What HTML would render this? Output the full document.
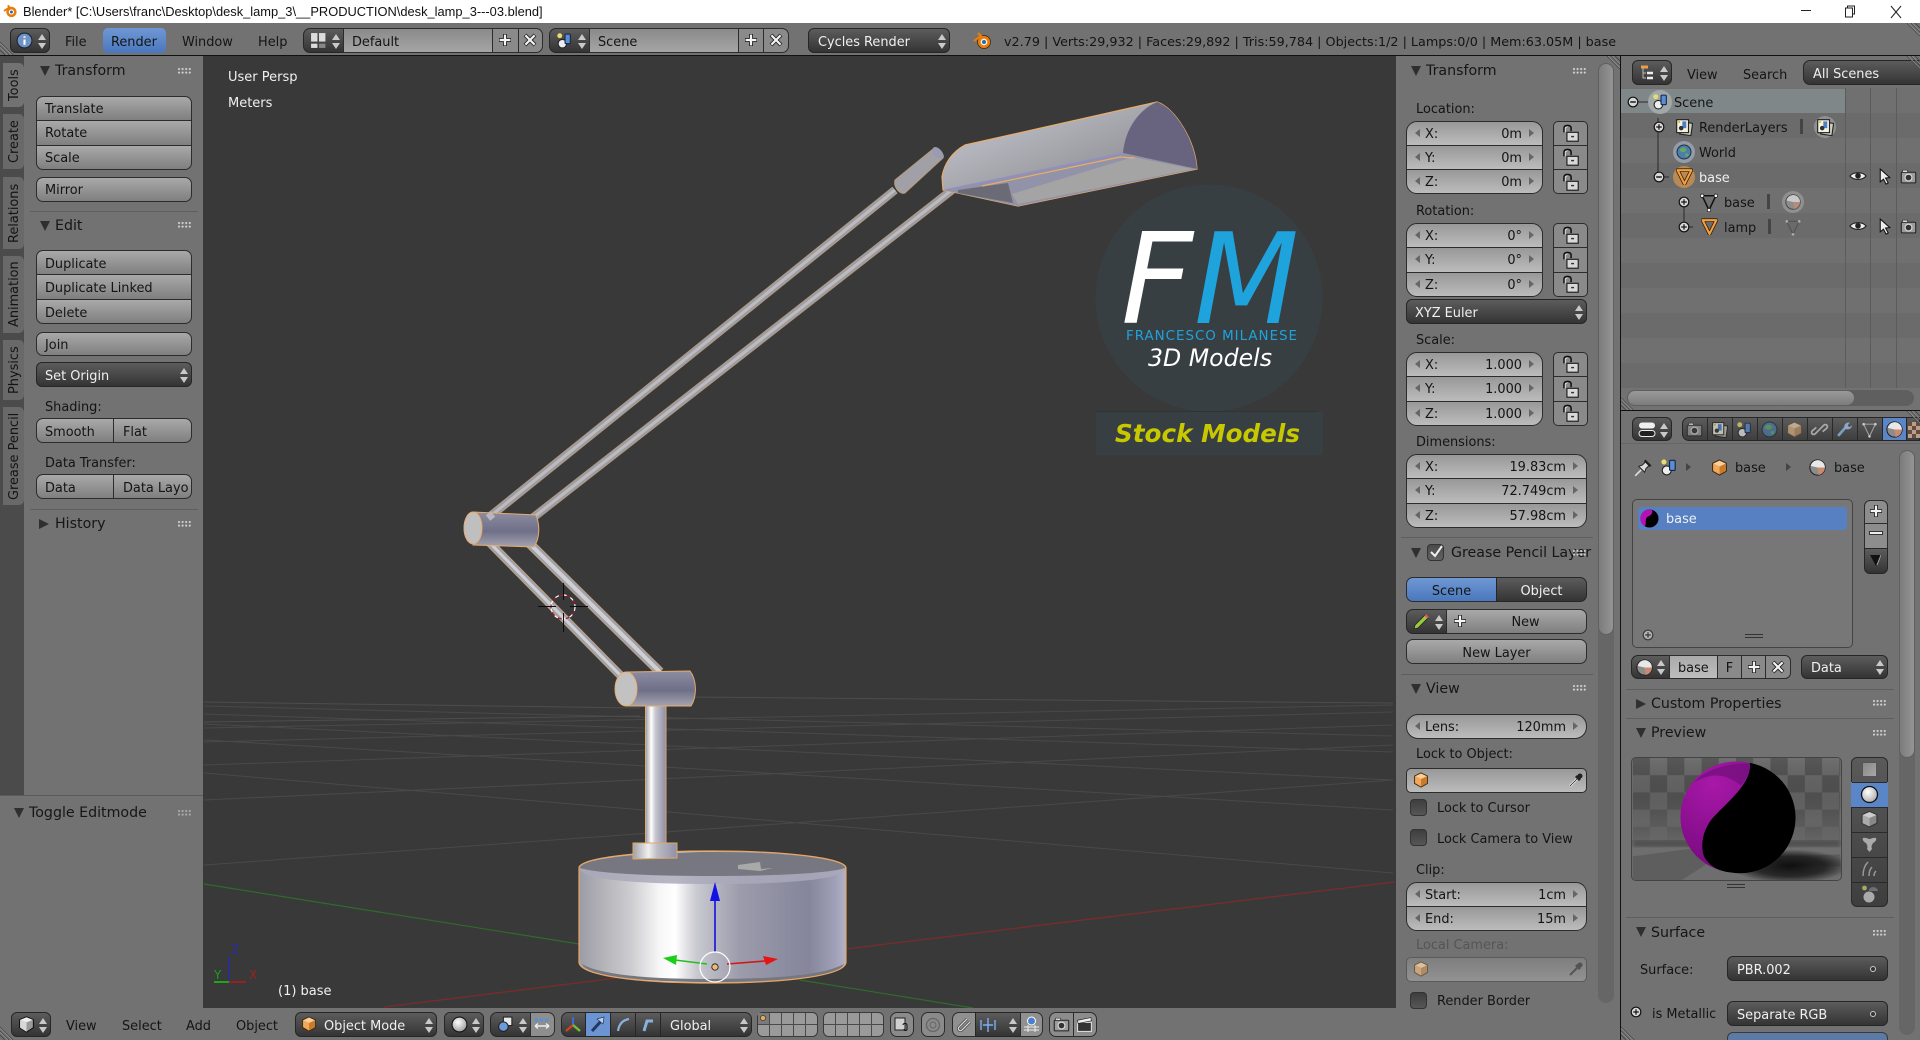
<!DOCTYPE html>
<html><head><meta charset="utf-8"><title>Blender</title>
<style>
html,body{margin:0;padding:0;width:1920px;height:1040px;overflow:hidden;background:#727272}
body{font-family:"DejaVu Sans","Liberation Sans",sans-serif;font-size:12.9px;color:#141414;position:relative}
div,span,svg{box-sizing:border-box}
.p{position:absolute}
.x{position:absolute;white-space:nowrap;line-height:20px;margin-top:1px}
.h{position:absolute;white-space:nowrap;line-height:20px;font-size:14.2px;color:#161616}
.w{color:#f0f0f0}
.b{position:absolute;background:linear-gradient(#a9a9a9,#7f7f7f);border:1px solid #2c2c2c;line-height:26px;padding-left:8px;white-space:nowrap;overflow:hidden}
.c{text-align:center;padding-left:0}
.d{position:absolute;background:linear-gradient(#5c5c5c,#343434);border:1px solid #262626;line-height:27px;padding-left:9px;white-space:nowrap;color:#f0f0f0;border-radius:6px}
.n{position:absolute;background:linear-gradient(#989898,#bcbcbc);border:1px solid #2c2c2c;line-height:26px;white-space:nowrap}
.n span{position:absolute;left:18px}
.n b{font-weight:normal;position:absolute;right:20px}
.n i,.n u{position:absolute;top:7px;width:0;height:0;border-top:4px solid transparent;border-bottom:4px solid transparent}
.n i{left:8px;border-right:5px solid #666}
.n u{right:8px;border-left:5px solid #666}
.ra{border-radius:7px}.rt{border-radius:7px 7px 0 0}.rb{border-radius:0 0 7px 7px}.rl{border-radius:7px 0 0 7px}.rr{border-radius:0 7px 7px 0}
.big{border-radius:12px}.bt{border-radius:11px 11px 0 0}.bb{border-radius:0 0 11px 11px}
.li{background:linear-gradient(#8a8a8a,#8a8a8a)}
.dk{background:linear-gradient(#5c5c5c,#343434)}
.td,.tr{position:absolute;width:0;height:0}
.td{border-left:5px solid transparent;border-right:5px solid transparent;border-top:10px solid #2f2f2f}
.tr{border-top:5px solid transparent;border-bottom:5px solid transparent;border-left:10px solid #2f2f2f}
.g{position:absolute;width:14px;height:7px;background:radial-gradient(circle at 1px 1px,#d2d2d2 .9px,transparent 1.2px) 0 0/3.6px 3.6px}
.s{position:absolute;height:1px;background:#5e5e5e}
.tab{position:absolute;left:3px;width:21px;background:#696969;border-radius:5px 0 0 5px;writing-mode:vertical-rl;transform:rotate(180deg);line-height:23px;text-align:center;font-size:12.9px;white-space:nowrap}
.cb{position:absolute;width:17px;height:17px;border-radius:4px;background:linear-gradient(#3e3e3e,#565656);border:1px solid #333}
.ic{position:absolute;overflow:visible}
.ud{position:absolute;right:3px;top:4px;width:8px;height:16px}
.ud:before,.ud:after{content:"";position:absolute;left:0;border-left:4px solid transparent;border-right:4px solid transparent}
.ud:before{top:1px;border-bottom:6px solid #c9c9c9}
.ud:after{bottom:0;border-top:6px solid #c9c9c9}
</style></head><body>
<svg width="0" height="0" style="position:absolute"><defs>
<symbol id="lock" viewBox="0 0 16 16"><path d="M2.5 7V3.5C2.5 2 3.5 1.2 5.5 1.2S8.5 2 8.5 3.5V6" fill="none" stroke="#111" stroke-width="1.3"/><path d="M3.6 7V3.5C3.6 3 5 2.4 5.5 2.4" fill="none" stroke="#eee" stroke-width=".7"/><rect x="5" y="7" width="9.5" height="7.5" fill="#d8d8d8" stroke="#222"/><rect x="8.5" y="10" width="2.5" height="1.2" fill="#333"/></symbol>
<symbol id="cube" viewBox="0 0 16 16"><path d="M8 .8L14.5 4V11.5L8 15.2L1.5 11.5V4Z" fill="#c97b2d" stroke="#33240e" stroke-width=".8"/><path d="M2.2 4.3L8 7L13.8 4.3L8 1.6Z" fill="#f9d09a"/><path d="M8 7V14.4L2.2 11V4.3Z" fill="#f2a85a"/></symbol>
<symbol id="cubeg" viewBox="0 0 16 16"><path d="M8 .8L14.5 4V11.5L8 15.2L1.5 11.5V4Z" fill="#b08a60" stroke="#5b5040" stroke-width=".8"/><path d="M2.2 4.3L8 7L13.8 4.3L8 1.6Z" fill="#d8c0a0"/><path d="M8 7V14.4L2.2 11V4.3Z" fill="#c8a680"/></symbol>
<symbol id="mesh" viewBox="0 0 16 16"><path d="M2.5 3H13.5L8 14.5Z" fill="none" stroke="#111" stroke-width="1.2"/><circle cx="2.5" cy="3" r="1.4" fill="#fff" stroke="#111" stroke-width=".6"/><circle cx="13.5" cy="3" r="1.4" fill="#fff" stroke="#111" stroke-width=".6"/><circle cx="8" cy="14.5" r="1.4" fill="#fff" stroke="#111" stroke-width=".6"/></symbol>
<symbol id="meshg" viewBox="0 0 16 16"><path d="M2.5 3H13.5L8 14.5Z" fill="none" stroke="#555" stroke-width="1.1"/><circle cx="2.5" cy="3" r="1.2" fill="#aaa"/><circle cx="13.5" cy="3" r="1.2" fill="#aaa"/><circle cx="8" cy="14.5" r="1.2" fill="#aaa"/></symbol>
<symbol id="obj" viewBox="0 0 16 16"><path d="M1.5 2H14.5L8 15Z" fill="none" stroke="#2a1a08" stroke-width="3.4" stroke-linejoin="round"/><path d="M1.5 2H14.5L8 15Z" fill="none" stroke="#f4a040" stroke-width="2" stroke-linejoin="round"/></symbol>
<symbol id="eye" viewBox="0 0 16 16"><path d="M.8 8C4 4 12 4 15.2 8C12 12 4 12 .8 8Z" fill="#eee" stroke="#222"/><circle cx="8" cy="7.8" r="2.5" fill="#222"/></symbol>
<symbol id="cur" viewBox="0 0 16 16"><path d="M4 1V13L7 10.5L9.5 15.2L11.5 14L9 9.5L13 9Z" fill="#eee" stroke="#111"/></symbol>
<symbol id="cam" viewBox="0 0 16 16"><rect x="1.2" y="4" width="13.6" height="10" rx="1" fill="#9c9c9c" stroke="#222"/><circle cx="8" cy="9" r="3.2" fill="#333" stroke="#e0e0e0"/><rect x="2.5" y="2" width="4.5" height="2" fill="#ddd" stroke="#222" stroke-width=".5"/></symbol>
<symbol id="scene" viewBox="0 0 16 16"><circle cx="6" cy="11" r="4" fill="#eee" stroke="#222"/><rect x="8.5" y="2" width="5" height="9" rx="1" fill="#5a8ed0" stroke="#14244a"/><circle cx="3.5" cy="3.5" r="2.3" fill="#e6dd6e"/></symbol>
<symbol id="lay" viewBox="0 0 16 16"><rect x="5" y="4" width="10" height="11" fill="#cfcfc0" stroke="#222" transform="rotate(8 10 9)"/><rect x="1.5" y="1.5" width="10.5" height="11.5" fill="#f5f1df" stroke="#222"/><rect x="6.5" y="3" width="3.5" height="6" fill="#4a80c8"/><circle cx="5.5" cy="9" r="2" fill="#333"/><circle cx="3.6" cy="3.6" r="1" fill="#d8c830"/></symbol>
<symbol id="world" viewBox="0 0 16 16"><circle cx="8" cy="8" r="7" fill="#4d7da8" stroke="#1e2e40"/><path d="M4 5C6 3 9 3 10 5S8 9 6 8S3 7 4 5ZM9 10C11 9 13 9 12.5 11S9 14 9 10Z" fill="#64a868"/></symbol>
<symbol id="mat" viewBox="0 0 16 16"><circle cx="8" cy="8" r="7.2" fill="#8c8c8c" stroke="#222"/><path d="M8 8H15A7 7 0 0 0 8 1A7 7 0 0 0 1.5 6.5Z" fill="#e8e8e8"/><path d="M8 8H15A7 7 0 0 1 9 15Z" fill="#c88a70"/></symbol>
<symbol id="plus" viewBox="0 0 16 16"><path d="M8 2V14M2 8H14" stroke="#222" stroke-width="4"/><path d="M8 2.6V13.4M2.6 8H13.4" stroke="#f4f4f4" stroke-width="2.2"/></symbol>
<symbol id="cross" viewBox="0 0 16 16"><path d="M3 3L13 13M13 3L3 13" stroke="#222" stroke-width="4"/><path d="M3.4 3.4L12.6 12.6M12.6 3.4L3.4 12.6" stroke="#f4f4f4" stroke-width="2.2"/></symbol>
<symbol id="circp" viewBox="0 0 12 12"><circle cx="6" cy="6" r="4.8" fill="#d8d8d8" stroke="#111" stroke-width="1.2"/><path d="M3.2 6H8.8M6 3.2V8.8" stroke="#111" stroke-width="1.2"/></symbol>
<symbol id="circm" viewBox="0 0 12 12"><circle cx="6" cy="6" r="4.8" fill="#d8d8d8" stroke="#111" stroke-width="1.2"/><path d="M3.2 6H8.8" stroke="#111" stroke-width="1.4"/></symbol>
<symbol id="hatch" viewBox="0 0 16 16"><path d="M0 3L13 16M0 7L9 16M0 11L5 16" stroke="#4a4a4a" stroke-width="1" fill="none"/><path d="M0 4L12 16M0 8L8 16" stroke="#999" stroke-width=".6" fill="none"/></symbol>
<symbol id="hatchr" viewBox="0 0 16 16"><path d="M3 0L16 13M7 0L16 9M11 0L16 5" stroke="#4a4a4a" stroke-width="1" fill="none"/><path d="M4 0L16 12M8 0L16 8" stroke="#999" stroke-width=".6" fill="none"/></symbol>
</defs></svg>

<!-- title bar -->
<div class="p" style="left:0;top:0;width:1920px;height:23px;background:#fff"></div>
<svg class="ic" style="left:3px;top:3px" width="15" height="16" viewBox="0 0 16 16"><circle cx="9" cy="9" r="5.5" fill="#e87d0d"/><circle cx="9" cy="9" r="2.8" fill="#fff"/><circle cx="9" cy="9" r="1.6" fill="#2a6ab0"/><path d="M1 8L7 4L5 2" stroke="#e87d0d" stroke-width="2" fill="none"/></svg>
<div class="x" style="left:23px;top:1px;font:12.87px/20px 'Liberation Sans',sans-serif;color:#111">Blender* [C:\Users\franc\Desktop\desk_lamp_3\__PRODUCTION\desk_lamp_3---03.blend]</div>
<div class="p" style="left:1801px;top:10px;width:10px;height:1px;background:#222"></div>
<svg class="ic" style="left:1844px;top:5px" width="12" height="13" viewBox="0 0 12 13"><path d="M3.5 3V1H10.5V9H8.5" fill="none" stroke="#222"/><rect x="1.5" y="3" width="7" height="9" fill="#fff" stroke="#222"/></svg>
<svg class="ic" style="left:1890px;top:5px" width="12" height="14" viewBox="0 0 12 14"><path d="M1 1L11 13M11 1L1 13" stroke="#222" fill="none"/></svg>

<!-- top header -->
<div class="p" style="left:0;top:23px;width:1920px;height:32px;background:#727272"></div>
<div class="p" style="left:0;top:55px;width:1920px;height:1px;background:#111"></div>
<svg class="ic" style="left:0;top:39px" width="16" height="16"><use href="#hatch"/></svg>
<svg class="ic" style="left:1904px;top:23px" width="16" height="16"><use href="#hatchr"/></svg>

<div class="d" style="left:10px;top:28px;width:40px;height:25px;padding:0"><svg class="ic" style="left:5px;top:3px" width="17" height="17" viewBox="0 0 16 16"><circle cx="8" cy="8" r="7" fill="#6f93c4" stroke="#1a2233"/><path d="M8 4V5.4M8 7V12" stroke="#fff" stroke-width="2"/></svg><span class="ud"></span></div>
<div class="x" style="left:65px;top:32px">File</div>
<div class="p" style="left:103px;top:28px;width:63px;height:25px;background:linear-gradient(#6f97d4,#4a78bd);border-radius:5px"></div>
<div class="x" style="left:111px;top:32px">Render</div>
<div class="x" style="left:182px;top:32px">Window</div>
<div class="x" style="left:258px;top:32px">Help</div>

<div class="d" style="left:303px;top:28px;width:41px;height:25px;padding:0;border-radius:7px 0 0 7px"><svg class="ic" style="left:6px;top:3px" width="17" height="17" viewBox="0 0 16 16"><rect x="1" y="1" width="6" height="8" fill="#ddd"/><rect x="8.5" y="1" width="6" height="8" fill="#ddd"/><rect x="1" y="11" width="6" height="4" fill="#ddd"/><rect x="8.5" y="11" width="6" height="4" fill="#888"/></svg><span class="ud"></span></div>
<div class="b" style="left:343px;top:28px;width:150px;height:25px;background:linear-gradient(#8a8a8a,#a5a5a5);line-height:27px">Default</div>
<div class="b li" style="left:492px;top:28px;width:27px;height:25px"></div><svg class="ic" style="left:497px;top:32px" width="16" height="16"><use href="#plus"/></svg>
<div class="b li rr" style="left:518px;top:28px;width:25px;height:25px"></div><svg class="ic" style="left:522px;top:32px" width="16" height="16"><use href="#cross"/></svg>

<div class="d" style="left:549px;top:28px;width:41px;height:25px;padding:0;border-radius:7px 0 0 7px"><svg class="ic" style="left:6px;top:3px" width="17" height="17"><use href="#scene"/></svg><span class="ud"></span></div>
<div class="b" style="left:589px;top:28px;width:150px;height:25px;background:linear-gradient(#8a8a8a,#a5a5a5);line-height:27px">Scene</div>
<div class="b li" style="left:738px;top:28px;width:26px;height:25px"></div><svg class="ic" style="left:743px;top:32px" width="16" height="16"><use href="#plus"/></svg>
<div class="b li rr" style="left:763px;top:28px;width:26px;height:25px"></div><svg class="ic" style="left:768px;top:32px" width="16" height="16"><use href="#cross"/></svg>

<div class="d" style="left:808px;top:28px;width:142px;height:25px">Cycles Render<span class="ud"></span></div>
<svg class="ic" style="left:972px;top:31px" width="20" height="19" viewBox="0 0 20 19"><circle cx="12" cy="11" r="6.5" fill="#e87d0d" stroke="#3a2106" stroke-width=".7"/><circle cx="12" cy="11" r="3.4" fill="#f6f0e6"/><circle cx="12" cy="11" r="2" fill="#2a6ab0"/><path d="M2 10L9 5L6 2" stroke="#e87d0d" stroke-width="2.2" fill="none"/></svg>
<div class="x" style="left:1004px;top:32px;font-size:12.76px">v2.79 | Verts:29,932 | Faces:29,892 | Tris:59,784 | Objects:1/2 | Lamps:0/0 | Mem:63.05M | base</div>

<!-- viewport + lamp -->
<div class="p" style="left:203px;top:56px;width:1194px;height:952px;background:#393939"></div>
<svg class="p" style="left:0;top:0" width="1920" height="1040" viewBox="0 0 1920 1040">
<defs>
<clipPath id="vp"><rect x="203" y="56" width="1194" height="952"/></clipPath>
<linearGradient id="bs" gradientUnits="userSpaceOnUse" x1="579" y1="0" x2="846" y2="0"><stop offset="0" stop-color="#9c9ca6"/><stop offset=".08" stop-color="#b0b0b6"/><stop offset=".2" stop-color="#cfcfd2"/><stop offset=".3" stop-color="#f6f6f6"/><stop offset=".36" stop-color="#fff"/><stop offset=".44" stop-color="#c9c9d0"/><stop offset=".6" stop-color="#9c9cac"/><stop offset=".86" stop-color="#85859b"/><stop offset=".96" stop-color="#a0a0b8"/><stop offset="1" stop-color="#b2b2c8"/></linearGradient>
<linearGradient id="ps" gradientUnits="userSpaceOnUse" x1="645" y1="0" x2="666" y2="0"><stop offset="0" stop-color="#8f8f98"/><stop offset=".3" stop-color="#fff"/><stop offset=".5" stop-color="#c6c6ce"/><stop offset="1" stop-color="#8d8da8"/></linearGradient>
<linearGradient id="cs" gradientUnits="userSpaceOnUse" x1="633" y1="0" x2="677" y2="0"><stop offset="0" stop-color="#a0a0a8"/><stop offset=".35" stop-color="#f0f0f0"/><stop offset=".55" stop-color="#bcbcc4"/><stop offset="1" stop-color="#9090a6"/></linearGradient>
<linearGradient id="ky" x1="0" y1="0" x2="0" y2="1"><stop offset="0" stop-color="#8c8ca2"/><stop offset=".55" stop-color="#6f6f88"/><stop offset="1" stop-color="#a4a4b0"/></linearGradient>
<linearGradient id="shade" gradientUnits="userSpaceOnUse" x1="1040" y1="120" x2="1065" y2="180"><stop offset="0" stop-color="#b4b4bc"/><stop offset="1" stop-color="#98989e"/></linearGradient>
</defs>
<g clip-path="url(#vp)">
<g stroke="#494949" stroke-width="1" fill="none">
<path d="M204 773L1393 873M204 740L1393 810M204 724L1393 780M204 714L1393 752M204 706L1393 736M204 865L1393 780M204 800L1393 745M204 765L1393 725M204 742L1393 712M204 728L1393 705"/>
<path d="M204 722L640 716M204 702L640 708M690 697L1393 703" stroke="#4d4d4d"/>
</g>
<path d="M204 884L579 944M800 980L973 1008" stroke="#2f6b2c" stroke-width="1.2" fill="none"/>
<path d="M1394 882L846 949M617 978L384 1007" stroke="#7a2c2c" stroke-width="1.3" fill="none"/>
</g>
<!-- rods -->
<g fill="none" stroke-linecap="butt">
<path d="M488 518L895 190" stroke="#b89a78" stroke-width="8.5"/><path d="M488 518L895 190" stroke="#9c9ca2" stroke-width="7"/><path d="M488 518L895 190" stroke="#bcbcc0" stroke-width="3"/>
<path d="M530 520L952 190" stroke="#b89a78" stroke-width="8.5"/><path d="M530 520L952 190" stroke="#9c9ca2" stroke-width="7"/><path d="M530 520L952 190" stroke="#bcbcc0" stroke-width="3"/>
<path d="M487 540L622 677" stroke="#c9a67a" stroke-width="8.5"/><path d="M487 540L622 677" stroke="#a0a0a8" stroke-width="7"/><path d="M487 540L622 677" stroke="#cfcfd6" stroke-width="3"/>
<path d="M528 542L660 672" stroke="#c9a67a" stroke-width="9.5"/><path d="M528 542L660 672" stroke="#a0a0a8" stroke-width="8"/><path d="M528 542L660 672" stroke="#cfcfd6" stroke-width="4"/>
</g>
<!-- small cylinder -->
<path d="M895 180L933 149C938 147 945 154 943 158L905 193C900 195 893 187 895 180Z" fill="#a0a0a6" stroke="#b89a78"/>
<ellipse cx="938" cy="153" rx="4" ry="7" transform="rotate(-40 938 153)" fill="#9a9ab0"/>
<!-- shade -->
<path d="M965 145L1157 102C1175 108 1195 140 1197 169L1018 206L958 193L943 190L942 177C944 164 952 152 965 145Z" fill="url(#shade)" stroke="#e8ad6c" stroke-width="1.2"/>
<path d="M1157 102C1175 108 1195 140 1197 169L1123 153C1125 130 1138 110 1157 102Z" fill="#68647f"/>
<path d="M943 190L1123 153L1197 169L1018 206Z" fill="#9292a8"/>
<path d="M1012 194L1133 157L1193 169L1018 204Z" fill="#a4a4a4"/>
<path d="M958 190L1008 183L1013 203L958 193Z" fill="#6b6b75"/>
<path d="M982 186L1120 157L1135 158" stroke="#e8ad6c" stroke-width="1.3" fill="none"/>
<path d="M944 190L1123 153" stroke="#8f8fd0" stroke-width="1"/>
<!-- knee -->
<path d="M473 512L536 515C540 525 540 538 534 547L473 545Z" fill="url(#ky)" stroke="#e8ad6c" stroke-width="1"/>
<ellipse cx="473" cy="528" rx="9" ry="16" fill="#bfbfbf" stroke="#e8ad6c" stroke-width="1"/>
<path d="M488 518L493 514" stroke="#b8b8bc" stroke-width="7"/>
<!-- lower joint -->
<path d="M626 672L690 671C697 680 697 697 691 706L626 706Z" fill="url(#ky)" stroke="#e8ad6c" stroke-width="1"/>
<ellipse cx="626" cy="689" rx="11" ry="17" fill="#c2c2c2" stroke="#e8ad6c" stroke-width="1"/>
<!-- post -->
<rect x="645.5" y="706" width="20.5" height="138" fill="url(#ps)" stroke="#e0a868" stroke-width="1"/>
<!-- base -->
<path d="M579 868C579 858 640 851 712 851C784 851 846 858 846 868V962C846 975 790 983 712 983C634 983 579 975 579 962Z" fill="url(#bs)" stroke="#eaa660" stroke-width="1.2"/>
<path d="M580 869C582 880 640 884 712 884C784 884 843 880 845 869C790 872 640 872 580 869Z" fill="#a9a9bb" opacity=".85"/>
<path d="M580 868C580 859 640 852 712 852C784 852 845 859 845 868C830 873 780 876 712 876C644 876 596 873 580 868Z" fill="#767781"/>
<path d="M582 964C600 975 650 979 712 979C775 979 825 975 844 964C840 975 790 982 712 982C634 982 586 975 582 964Z" fill="#77777f"/>
<path d="M738 865L760 862L761 869L773 868L760 871L738 869Z" fill="#a9a9a9"/>
<!-- collar -->
<path d="M633 843L677 843V858L633 859Z" fill="url(#cs)" stroke="#e0a868" stroke-width="1"/>
<!-- gizmo -->
<path d="M715 952V895" stroke="#1010e0" stroke-width="1.6"/><path d="M715 882L720 901H710Z" fill="#1212e6"/>
<path d="M727 964L765 961" stroke="#d01818" stroke-width="1.6"/><path d="M778 959L763 956L766 965Z" fill="#e81414"/>
<path d="M707 964L675 960" stroke="#20c020" stroke-width="1.6"/><path d="M663 958L677 955L676 965Z" fill="#18d018"/>
<circle cx="715" cy="967" r="15" fill="none" stroke="#fff" stroke-width="1.2"/>
<circle cx="715" cy="967" r="3.2" fill="#eeb878" stroke="#111" stroke-width=".8"/>
<!-- 3d cursor -->
<circle cx="563" cy="607" r="12" fill="none" stroke="#fff" stroke-width="1.2" stroke-dasharray="4 4"/>
<circle cx="563" cy="607" r="12" fill="none" stroke="#a0182c" stroke-width="1.2" stroke-dasharray="4 4" stroke-dashoffset="4"/>
<path d="M538 606.5H556M570 606.5H588M563.5 583V600M563.5 613V632" stroke="#0c0c0c" stroke-width="1"/>
<!-- axis widget -->
<path d="M229 982V957" stroke="#2828c8" stroke-width="1.2"/><path d="M229 982H246" stroke="#b81818" stroke-width="1.6"/><path d="M229 982H214" stroke="#18a818" stroke-width="2"/>
<text x="231" y="954" font-family="DejaVu Sans" font-size="12" fill="#2a2aa8">Z</text>
<text x="249" y="979" font-family="DejaVu Sans" font-size="12" fill="#9c2222">X</text>
<text x="214" y="979" font-family="DejaVu Sans" font-size="12" fill="#18a018">Y</text>
<!-- logo -->
<circle cx="1209" cy="298" r="113.5" fill="#383f43"/>
<rect x="1096" y="412" width="227" height="43" fill="#383f43"/>
<rect x="1096" y="411" width="220" height="1" fill="#2e3235" opacity=".7"/>
<text x="1121" y="323" font-family="DejaVu Sans" font-style="italic" font-size="126" fill="#fff" textLength="72" lengthAdjust="spacingAndGlyphs">F</text>
<text x="1194" y="323" font-family="DejaVu Sans" font-style="italic" font-size="126" fill="#1fa3dc" textLength="105" lengthAdjust="spacingAndGlyphs">M</text>
<text x="1126" y="340" font-family="DejaVu Sans" font-size="13.4" fill="#1fa3dc" textLength="171">FRANCESCO MILANESE</text>
<text x="1148" y="366" font-family="DejaVu Sans" font-style="italic" font-size="23.6" fill="#fff" textLength="124">3D Models</text>
<text x="1115" y="442" font-family="DejaVu Sans" font-style="italic" font-weight="bold" font-size="24.6" fill="#c8c800" textLength="185">Stock Models</text>
</svg>
<div class="x w" style="left:228px;top:67px;font-size:13px">User Persp</div>
<div class="x w" style="left:228px;top:93px;font-size:13px">Meters</div>
<div class="x w" style="left:278px;top:981px;font-size:13px">(1) base</div>

<!-- left tabs and tool shelf -->
<div class="p" style="left:0;top:56px;width:24px;height:740px;background:#4b4b4b"></div>
<div class="p" style="left:24px;top:56px;width:179px;height:740px;background:#727272"></div>
<div class="p" style="left:0;top:796px;width:203px;height:212px;background:#727272"></div>
<div class="p" style="left:0;top:795px;width:203px;height:1px;background:#5a5a5a"></div>
<div class="tab" style="top:63px;height:44px;background:#727272">Tools</div>
<div class="tab" style="top:114px;height:55px">Create</div>
<div class="tab" style="top:177px;height:72px">Relations</div>
<div class="tab" style="top:256px;height:77px">Animation</div>
<div class="tab" style="top:340px;height:60px">Physics</div>
<div class="tab" style="top:407px;height:98px">Grease Pencil</div>

<div class="td" style="left:40px;top:66px"></div><div class="h" style="left:55px;top:61px">Transform</div><div class="g" style="left:178px;top:68px"></div>
<div class="b rt" style="left:36px;top:96px;width:156px;height:25px">Translate</div>
<div class="b" style="left:36px;top:120px;width:156px;height:26px">Rotate</div>
<div class="b rb" style="left:36px;top:145px;width:156px;height:25px">Scale</div>
<div class="b ra" style="left:36px;top:177px;width:156px;height:25px">Mirror</div>
<div class="s" style="left:30px;top:211px;width:168px"></div>
<div class="td" style="left:40px;top:221px"></div><div class="h" style="left:55px;top:216px">Edit</div><div class="g" style="left:178px;top:222px"></div>
<div class="b rt" style="left:36px;top:250px;width:156px;height:25px;line-height:27px">Duplicate</div>
<div class="b" style="left:36px;top:274px;width:156px;height:26px;line-height:27px">Duplicate Linked</div>
<div class="b rb" style="left:36px;top:299px;width:156px;height:25px;line-height:27px">Delete</div>
<div class="b ra" style="left:36px;top:332px;width:156px;height:24px">Join</div>
<div class="d" style="left:36px;top:362px;width:156px;height:25px;padding-left:8px">Set Origin<span class="ud"></span></div>
<div class="x" style="left:45px;top:397px">Shading:</div>
<div class="b rl" style="left:36px;top:418px;width:78px;height:25px;line-height:27px">Smooth</div>
<div class="b rr" style="left:113px;top:418px;width:79px;height:25px;padding-left:9px;line-height:27px">Flat</div>
<div class="x" style="left:45px;top:453px">Data Transfer:</div>
<div class="b rl" style="left:36px;top:474px;width:78px;height:25px;line-height:27px">Data</div>
<div class="b rr" style="left:113px;top:474px;width:79px;height:25px;padding-left:9px;line-height:27px">Data Layo</div>
<div class="s" style="left:30px;top:509px;width:168px"></div>
<div class="tr" style="left:39px;top:519px"></div><div class="h" style="left:55px;top:514px">History</div><div class="g" style="left:178px;top:521px"></div>
<div class="td" style="left:14px;top:808px"></div><div class="h" style="left:29px;top:803px">Toggle Editmode</div><div class="g" style="left:178px;top:810px;opacity:.6"></div>

<!-- bottom header -->
<div class="p" style="left:0;top:1008px;width:1620px;height:32px;background:#727272"></div>
<svg class="ic" style="left:0;top:1024px" width="16" height="16"><use href="#hatch"/></svg>
<div class="d" style="left:11px;top:1012px;width:40px;height:25px;padding:0"><svg class="ic" style="left:6px;top:3px" width="17" height="17" viewBox="0 0 16 16"><path d="M8 .8L14.5 3.5V11L8 15.2L1.5 11V3.5Z" fill="#9a9a9a" stroke="#111"/><path d="M2 3.7L8 6L14 3.7L8 1.2Z" fill="#eee"/><path d="M8 6V14.8L2 11V3.7Z" fill="#d8d8d8"/></svg><span class="ud"></span></div>
<div class="x" style="left:66px;top:1016px">View</div>
<div class="x" style="left:122px;top:1016px">Select</div>
<div class="x" style="left:186px;top:1016px">Add</div>
<div class="x" style="left:236px;top:1016px">Object</div>
<div class="d" style="left:295px;top:1012px;width:142px;height:25px;padding-left:28px">Object Mode<span class="ud"></span></div><svg class="ic" style="left:301px;top:1016px" width="16" height="16"><use href="#cube"/></svg>
<div class="d" style="left:444px;top:1012px;width:40px;height:25px;padding:0"><svg class="ic" style="left:6px;top:3px" width="17" height="17" viewBox="0 0 16 16"><defs><radialGradient id="sp" cx=".4" cy=".35" r=".7"><stop offset="0" stop-color="#fff"/><stop offset="1" stop-color="#999"/></radialGradient></defs><circle cx="8" cy="8" r="7" fill="url(#sp)" stroke="#111"/></svg><span class="ud"></span></div>
<div class="d" style="left:490px;top:1012px;width:41px;height:25px;padding:0;border-radius:7px 0 0 7px"><svg class="ic" style="left:6px;top:3px" width="17" height="17" viewBox="0 0 16 16"><rect x="6" y="1" width="8" height="8" fill="#e8e8e8" stroke="#222"/><circle cx="6" cy="10" r="4.5" fill="#6a9ad8" stroke="#222"/></svg><span class="ud"></span></div>
<div class="b li rr" style="left:530px;top:1012px;width:25px;height:25px;background:#8e8e8e"></div>
<svg class="ic" style="left:533px;top:1016px" width="18" height="16" viewBox="0 0 18 16"><path d="M2 10H16M2 10L5 7.5M2 10L5 12.5M16 10L13 7.5M16 10L13 12.5" stroke="#eee" stroke-width="1.4" fill="none"/><path d="M2 4H16" stroke="#5090e0" stroke-width="3" stroke-dasharray="3 2"/></svg>
<div class="d" style="left:561px;top:1012px;width:25px;height:25px;padding:0;border-radius:7px 0 0 7px"></div>
<svg class="ic" style="left:564px;top:1016px" width="18" height="17" viewBox="0 0 18 17"><path d="M9 1V9" stroke="#3a6ad8" stroke-width="2"/><path d="M9 9L2 15" stroke="#d04020" stroke-width="2.4"/><path d="M9 9L16 15" stroke="#70c030" stroke-width="2.4"/></svg>
<div class="p" style="left:585px;top:1012px;width:26px;height:25px;background:#6b95d2;border:1px solid #262626"></div>
<svg class="ic" style="left:589px;top:1016px" width="18" height="17" viewBox="0 0 18 17"><path d="M3 15L14 3" stroke="#22385c" stroke-width="3"/><path d="M15 1L14 8L8 3Z" fill="#b8d0f0" stroke="#22385c" stroke-width=".7"/></svg>
<div class="d" style="left:610px;top:1012px;width:26px;height:25px;padding:0;border-radius:0"></div>
<svg class="ic" style="left:614px;top:1016px" width="18" height="17" viewBox="0 0 18 17"><path d="M4 15C5 8 9 4 15 3" stroke="#8ab0e0" stroke-width="2.2" fill="none"/></svg>
<div class="d" style="left:635px;top:1012px;width:26px;height:25px;padding:0;border-radius:0"></div>
<svg class="ic" style="left:639px;top:1016px" width="18" height="17" viewBox="0 0 18 17"><path d="M5 15L8 5H14" stroke="#8ab0e0" stroke-width="3" fill="none"/></svg>
<div class="d" style="left:660px;top:1012px;width:92px;height:25px;border-radius:0 7px 7px 0">Global<span class="ud"></span></div>
<!-- layer grids -->
<svg class="p" style="left:757px;top:1012px" width="130" height="26" viewBox="0 0 130 26">
<g fill="#9a9a9a" stroke="#3a3a3a" stroke-width="1"><rect x=".5" y=".5" width="60" height="24" rx="5"/><rect x="66.5" y=".5" width="60" height="24" rx="5"/></g>
<path d="M12.5 1V24M24.5 1V24M36.5 1V24M48.5 1V24M78.5 1V24M90.5 1V24M102.5 1V24M114.5 1V24M1 12.5H60M67 12.5H126" stroke="#4a4a4a" fill="none"/>
<rect x="1" y="1" width="11" height="11" fill="#7a7a7a"/><circle cx="6" cy="6" r="2.6" fill="#e8a860" stroke="#222" stroke-width=".6"/>
</svg>
<div class="b ra" style="left:890px;top:1012px;width:24px;height:25px;background:#8a8a8a"></div>
<svg class="ic" style="left:894px;top:1016px" width="16" height="17" viewBox="0 0 16 17"><rect x="1" y="2" width="10" height="12" fill="#d0d0d0" stroke="#222"/><path d="M9 9C9 7 13 7 13 9V13C13 15 10 15 10 13" stroke="#111" fill="none"/></svg>
<div class="b ra" style="left:921px;top:1012px;width:24px;height:25px;background:#8a8a8a"></div>
<svg class="ic" style="left:925px;top:1017px" width="16" height="16" viewBox="0 0 16 16"><circle cx="8" cy="8" r="6.5" fill="none" stroke="#666" stroke-width="1.3"/><circle cx="8" cy="8" r="3" fill="none" stroke="#666"/></svg>
<div class="b rl" style="left:952px;top:1012px;width:24px;height:25px;background:#909090"></div>
<svg class="ic" style="left:956px;top:1017px" width="16" height="16" viewBox="0 0 16 16"><path d="M11 2L3 10C1 12 4 15 6 13L14 5" stroke="#555" stroke-width="3" fill="none"/><path d="M11 2L3 10C1 12 4 15 6 13L14 5" stroke="#ddd" stroke-width="1.2" fill="none"/></svg>
<div class="d" style="left:975px;top:1012px;width:46px;height:25px;padding:0;border-radius:0"><span class="ud"></span></div>
<svg class="ic" style="left:979px;top:1017px" width="18" height="16" viewBox="0 0 18 16"><path d="M2 3V13M16 3V13M9 1V15M4 8H14" stroke="#7ab0f0" stroke-width="1.4" fill="none"/></svg>
<div class="b rr" style="left:1020px;top:1012px;width:23px;height:25px;background:#909090"></div>
<svg class="ic" style="left:1023px;top:1016px" width="17" height="17" viewBox="0 0 17 17"><circle cx="8.5" cy="5" r="4" fill="#4a80d0" stroke="#fff"/><path d="M1 11H16M1 14H16M5 9V16M12 9V16" stroke="#eee" fill="none"/></svg>
<div class="b rl" style="left:1049px;top:1012px;width:25px;height:25px;background:#8c8c8c"></div>
<svg class="ic" style="left:1053px;top:1016px" width="17" height="17"><use href="#cam"/></svg>
<div class="b rr" style="left:1073px;top:1012px;width:24px;height:25px;background:#8c8c8c"></div>
<svg class="ic" style="left:1076px;top:1016px" width="17" height="17" viewBox="0 0 16 16"><rect x="1.5" y="6" width="13" height="8.5" fill="#333" stroke="#ddd"/><path d="M1.5 4L14 1.5L14.5 4.5L2 7Z" fill="#eee" stroke="#222" stroke-width=".6"/></svg>

<!-- N panel -->
<div class="p" style="left:1396px;top:56px;width:224px;height:952px;background:#727272"></div>
<div class="p" style="left:1598px;top:63px;width:16px;height:940px;background:#666;border-radius:8px"></div>
<div class="p" style="left:1598px;top:63px;width:16px;height:572px;background:linear-gradient(90deg,#7c7c7c,#949494);border-radius:8px;border:1px solid #606060"></div>
<svg class="ic" style="left:1604px;top:56px" width="16" height="16"><use href="#hatchr"/></svg>
<div class="td" style="left:1411px;top:66px"></div><div class="h" style="left:1426px;top:61px">Transform</div><div class="g" style="left:1573px;top:68px"></div>
<div class="x" style="left:1416px;top:99px">Location:</div>
<div class="n bt" style="left:1406px;top:121px;width:137px;height:25px"><i></i><u></u><span>X:</span><b>0m</b></div>
<div class="n" style="left:1406px;top:145px;width:137px;height:25px"><i></i><u></u><span>Y:</span><b>0m</b></div>
<div class="n bb" style="left:1406px;top:169px;width:137px;height:25px"><i></i><u></u><span>Z:</span><b>0m</b></div>
<div class="x" style="left:1416px;top:201px">Rotation:</div>
<div class="n bt" style="left:1406px;top:223px;width:137px;height:25px"><i></i><u></u><span>X:</span><b>0°</b></div>
<div class="n" style="left:1406px;top:247px;width:137px;height:26px"><i></i><u></u><span>Y:</span><b>0°</b></div>
<div class="n bb" style="left:1406px;top:272px;width:137px;height:25px"><i></i><u></u><span>Z:</span><b>0°</b></div>
<div class="d" style="left:1406px;top:299px;width:181px;height:25px;padding-left:8px">XYZ Euler<span class="ud"></span></div>
<div class="x" style="left:1416px;top:330px">Scale:</div>
<div class="n bt" style="left:1406px;top:352px;width:137px;height:25px"><i></i><u></u><span>X:</span><b>1.000</b></div>
<div class="n" style="left:1406px;top:376px;width:137px;height:26px"><i></i><u></u><span>Y:</span><b>1.000</b></div>
<div class="n bb" style="left:1406px;top:401px;width:137px;height:25px"><i></i><u></u><span>Z:</span><b>1.000</b></div>
<div class="x" style="left:1416px;top:432px">Dimensions:</div>
<div class="n bt" style="left:1406px;top:454px;width:181px;height:25px"><i></i><u></u><span>X:</span><b>19.83cm</b></div>
<div class="n" style="left:1406px;top:478px;width:181px;height:26px"><i></i><u></u><span>Y:</span><b>72.749cm</b></div>
<div class="n bb" style="left:1406px;top:503px;width:181px;height:25px"><i></i><u></u><span>Z:</span><b>57.98cm</b></div>
<!-- locks -->
<div class="b li" style="left:1553px;top:121px;width:35px;height:25px;border-radius:5px 5px 0 0"></div>
<div class="b li" style="left:1553px;top:145px;width:35px;height:25px"></div>
<div class="b li" style="left:1553px;top:169px;width:35px;height:25px;border-radius:0 0 5px 5px"></div>
<div class="b li" style="left:1553px;top:223px;width:35px;height:25px;border-radius:5px 5px 0 0"></div>
<div class="b li" style="left:1553px;top:247px;width:35px;height:26px"></div>
<div class="b li" style="left:1553px;top:272px;width:35px;height:25px;border-radius:0 0 5px 5px"></div>
<div class="b li" style="left:1553px;top:352px;width:35px;height:25px;border-radius:5px 5px 0 0"></div>
<div class="b li" style="left:1553px;top:376px;width:35px;height:26px"></div>
<div class="b li" style="left:1553px;top:401px;width:35px;height:25px;border-radius:0 0 5px 5px"></div>
<svg class="ic" style="left:1561px;top:124px" width="19" height="19"><use href="#lock"/></svg>
<svg class="ic" style="left:1561px;top:148px" width="19" height="19"><use href="#lock"/></svg>
<svg class="ic" style="left:1561px;top:173px" width="19" height="19"><use href="#lock"/></svg>
<svg class="ic" style="left:1561px;top:226px" width="19" height="19"><use href="#lock"/></svg>
<svg class="ic" style="left:1561px;top:251px" width="19" height="19"><use href="#lock"/></svg>
<svg class="ic" style="left:1561px;top:275px" width="19" height="19"><use href="#lock"/></svg>
<svg class="ic" style="left:1561px;top:355px" width="19" height="19"><use href="#lock"/></svg>
<svg class="ic" style="left:1561px;top:380px" width="19" height="19"><use href="#lock"/></svg>
<svg class="ic" style="left:1561px;top:404px" width="19" height="19"><use href="#lock"/></svg>
<div class="s" style="left:1401px;top:537px;width:192px"></div>
<div class="td" style="left:1411px;top:548px"></div>
<div class="cb" style="left:1427px;top:544px;background:linear-gradient(#4a4a4a,#626262)"></div>
<svg class="ic" style="left:1429px;top:544px" width="15" height="15" viewBox="0 0 15 15"><path d="M2 8L6 12L13 2" stroke="#f0f0f0" stroke-width="2" fill="none"/></svg>
<div class="h" style="left:1451px;top:543px">Grease Pencil Layer</div><div class="g" style="left:1573px;top:550px"></div>
<div class="p" style="left:1406px;top:577px;width:91px;height:25px;background:linear-gradient(#6f97d4,#4a78bd);border:1px solid #2c2c2c;border-radius:7px 0 0 7px;text-align:center;line-height:27px">Scene</div>
<div class="d" style="left:1496px;top:577px;width:91px;height:25px;padding:0;text-align:center;border-radius:0 7px 7px 0">Object</div>
<div class="d" style="left:1406px;top:609px;width:41px;height:25px;padding:0;border-radius:7px 0 0 7px"><svg class="ic" style="left:5px;top:3px" width="18" height="18" viewBox="0 0 18 18"><path d="M2 16L3 12L13 2L16 5L6 15Z" fill="#9ac83c" stroke="#222" stroke-width=".8"/><path d="M12.5 2.5L15.5 5.5L17 4L14 1Z" fill="#e05060"/></svg><span class="ud"></span></div>
<div class="b rr c" style="left:1446px;top:609px;width:141px;height:25px;padding-left:18px">New</div>
<svg class="ic" style="left:1452px;top:613px" width="16" height="16"><use href="#plus"/></svg>
<div class="b ra c" style="left:1406px;top:639px;width:181px;height:25px;line-height:27px">New Layer</div>
<div class="s" style="left:1401px;top:674px;width:192px"></div>
<div class="td" style="left:1411px;top:684px"></div><div class="h" style="left:1426px;top:679px">View</div><div class="g" style="left:1573px;top:685px"></div>
<div class="n big" style="left:1406px;top:714px;width:181px;height:25px"><i></i><u></u><span>Lens:</span><b>120mm</b></div>
<div class="x" style="left:1416px;top:744px">Lock to Object:</div>
<div class="n" style="left:1406px;top:768px;width:181px;height:25px;border-radius:5px"></div>
<svg class="ic" style="left:1413px;top:772px" width="16" height="16"><use href="#cube"/></svg>
<svg class="ic" style="left:1568px;top:772px" width="16" height="16" viewBox="0 0 16 16"><path d="M2 14L9 7" stroke="#eee" stroke-width="2.4"/><path d="M2 14L9 7" stroke="#111" stroke-width=".7"/><path d="M9 3L13 7L11 9L7 5Z" fill="#222"/><circle cx="12" cy="4" r="2.5" fill="#222"/></svg>
<div class="cb" style="left:1410px;top:799px"></div><div class="x" style="left:1437px;top:798px">Lock to Cursor</div>
<div class="cb" style="left:1410px;top:829px"></div><div class="x" style="left:1437px;top:829px">Lock Camera to View</div>
<div class="x" style="left:1416px;top:860px">Clip:</div>
<div class="n bt" style="left:1406px;top:882px;width:181px;height:25px"><i></i><u></u><span>Start:</span><b>1cm</b></div>
<div class="n bb" style="left:1406px;top:906px;width:181px;height:25px"><i></i><u></u><span>End:</span><b>15m</b></div>
<div class="x" style="left:1416px;top:935px;color:#555">Local Camera:</div>
<div class="n" style="left:1406px;top:957px;width:181px;height:25px;border-radius:5px;background:linear-gradient(#7e7e7e,#929292);border-color:#5a5a5a"></div>
<svg class="ic" style="left:1413px;top:961px" width="16" height="16"><use href="#cubeg"/></svg>
<svg class="ic" style="left:1568px;top:961px;opacity:.5" width="16" height="16" viewBox="0 0 16 16"><path d="M2 14L9 7" stroke="#222" stroke-width="2"/><path d="M9 3L13 7L11 9L7 5Z" fill="#222"/><circle cx="12" cy="4" r="2.5" fill="#222"/></svg>
<div class="cb" style="left:1410px;top:992px"></div>
<div class="x" style="left:1437px;top:991px;height:17px;overflow:hidden">Render Border</div>

<!-- vertical divider -->
<div class="p" style="left:1620px;top:56px;width:1px;height:984px;background:#111"></div>

<!-- outliner -->
<div class="p" style="left:1621px;top:56px;width:299px;height:32px;background:#727272"></div>
<div class="d" style="left:1632px;top:60px;width:40px;height:25px;padding:0"><svg class="ic" style="left:5px;top:3px" width="18" height="18" viewBox="0 0 18 18"><path d="M3 3H10" stroke="#e8a040" stroke-width="3"/><path d="M5 4V14H8M5 9H8" stroke="#bbb" fill="none"/><path d="M9 9H15M9 14H15" stroke="#eee" stroke-width="2.4"/></svg><span class="ud"></span></div>
<div class="x" style="left:1687px;top:65px">View</div>
<div class="x" style="left:1743px;top:65px">Search</div>
<div class="d" style="left:1803px;top:60px;width:120px;height:25px;border-radius:7px 0 0 7px">All Scenes</div>
<svg class="ic" style="left:1904px;top:56px" width="16" height="16"><use href="#hatchr"/></svg>
<div class="p" style="left:1621px;top:88px;width:299px;height:300px;background:repeating-linear-gradient(#707070 0 25px,#6b6b6b 25px 50px)"></div>
<div class="p" style="left:1621px;top:89px;width:224px;height:24px;background:#7f8788"></div>
<div class="p" style="left:1845px;top:88px;width:1px;height:300px;background:#5c5c5c"></div>
<div class="p" style="left:1870px;top:88px;width:1px;height:300px;background:#5c5c5c"></div>
<div class="p" style="left:1896px;top:88px;width:1px;height:300px;background:#5c5c5c"></div>
<svg class="p" style="left:1621px;top:88px" width="180" height="160"><path d="M12 14H28M37 30V90M37 89H48M63 115V140M63 139H72" stroke="#2a2a2a" fill="none"/></svg>
<svg class="ic" style="left:1627px;top:96px" width="12" height="12"><use href="#circm"/></svg>
<div class="p" style="left:1648px;top:90px;width:24px;height:24px;border-radius:12px;background:#a0a8a8"></div>
<svg class="ic" style="left:1652px;top:93px" width="17" height="17"><use href="#scene"/></svg>
<div class="x" style="left:1674px;top:93px">Scene</div>
<svg class="ic" style="left:1653px;top:121px" width="12" height="12"><use href="#circp"/></svg>
<svg class="ic" style="left:1675px;top:118px" width="18" height="18"><use href="#lay"/></svg>
<div class="x" style="left:1699px;top:118px">RenderLayers</div>
<div class="p" style="left:1800px;top:119px;width:3px;height:15px;background:#444"></div>
<div class="p" style="left:1814px;top:116px;width:22px;height:22px;border-radius:11px;background:#909090"></div>
<svg class="ic" style="left:1816px;top:118px" width="18" height="18"><use href="#lay"/></svg>
<div class="p" style="left:1673px;top:141px;width:22px;height:22px;border-radius:11px;background:#949ca8"></div>
<svg class="ic" style="left:1676px;top:144px" width="16" height="16"><use href="#world"/></svg>
<div class="x" style="left:1699px;top:143px">World</div>
<svg class="ic" style="left:1653px;top:171px" width="12" height="12"><use href="#circm"/></svg>
<div class="p" style="left:1673px;top:166px;width:22px;height:22px;border-radius:11px;background:#b98a55"></div>
<svg class="ic" style="left:1676px;top:168px" width="17" height="17"><use href="#obj"/></svg>
<div class="x w" style="left:1699px;top:168px">base</div>
<svg class="ic" style="left:1849px;top:167px" width="18" height="18"><use href="#eye"/></svg>
<svg class="ic" style="left:1876px;top:168px" width="17" height="17"><use href="#cur"/></svg>
<svg class="ic" style="left:1900px;top:168px" width="17" height="17"><use href="#cam"/></svg>
<svg class="ic" style="left:1678px;top:196px" width="12" height="12"><use href="#circp"/></svg>
<svg class="ic" style="left:1699px;top:192px" width="20" height="20"><use href="#mesh"/></svg>
<div class="x" style="left:1724px;top:193px">base</div>
<div class="p" style="left:1767px;top:194px;width:3px;height:15px;background:#444"></div>
<div class="p" style="left:1782px;top:191px;width:22px;height:22px;border-radius:11px;background:#909090"></div>
<svg class="ic" style="left:1785px;top:194px;opacity:.65" width="16" height="16"><use href="#mat"/></svg>
<svg class="ic" style="left:1678px;top:221px" width="12" height="12"><use href="#circp"/></svg>
<svg class="ic" style="left:1701px;top:218px" width="17" height="17"><use href="#obj"/></svg>
<div class="x" style="left:1724px;top:218px">lamp</div>
<div class="p" style="left:1768px;top:219px;width:3px;height:15px;background:#444"></div>
<svg class="ic" style="left:1784px;top:218px" width="18" height="18"><use href="#meshg"/></svg>
<svg class="ic" style="left:1849px;top:217px" width="18" height="18"><use href="#eye"/></svg>
<svg class="ic" style="left:1876px;top:218px" width="17" height="17"><use href="#cur"/></svg>
<svg class="ic" style="left:1900px;top:218px" width="17" height="17"><use href="#cam"/></svg>
<div class="p" style="left:1621px;top:388px;width:299px;height:22px;background:#727272"></div>
<div class="p" style="left:1627px;top:390px;width:287px;height:16px;background:#5f5f5f;border-radius:8px"></div>
<div class="p" style="left:1627px;top:390px;width:228px;height:16px;background:linear-gradient(#999,#7c7c7c);border-radius:8px;border:1px solid #5f5f5f"></div>
<svg class="ic" style="left:1621px;top:395px" width="15" height="15"><use href="#hatch"/></svg>
<div class="p" style="left:1621px;top:410px;width:299px;height:1px;background:#111"></div>

<!-- properties -->
<div class="p" style="left:1621px;top:411px;width:299px;height:629px;background:#727272"></div>
<div class="p" style="left:1621px;top:443px;width:299px;height:1px;background:#666"></div>
<div class="d" style="left:1632px;top:417px;width:40px;height:24px;padding:0"><svg class="ic" style="left:5px;top:3px" width="18" height="17" viewBox="0 0 18 17"><rect x="1" y="1.5" width="16" height="6" rx="3" fill="#eee"/><rect x="1" y="9.5" width="16" height="6" rx="3" fill="#222" stroke="#eee"/></svg><span class="ud"></span></div>
<div class="p" style="left:1682px;top:417px;width:238px;height:24px;background:linear-gradient(#5c5c5c,#3e3e3e);border:1px solid #262626;border-radius:7px 0 0 7px"></div>
<div class="p" style="left:1707px;top:418px;width:1px;height:22px;background:#2a2a2a"></div><div class="p" style="left:1732px;top:418px;width:1px;height:22px;background:#2a2a2a"></div><div class="p" style="left:1757px;top:418px;width:1px;height:22px;background:#2a2a2a"></div><div class="p" style="left:1782px;top:418px;width:1px;height:22px;background:#2a2a2a"></div><div class="p" style="left:1807px;top:418px;width:1px;height:22px;background:#2a2a2a"></div><div class="p" style="left:1832px;top:418px;width:1px;height:22px;background:#2a2a2a"></div><div class="p" style="left:1857px;top:418px;width:1px;height:22px;background:#2a2a2a"></div>
<div class="p" style="left:1882px;top:417px;width:25px;height:24px;background:#5a86c8;border:1px solid #262626"></div>
<svg class="ic" style="left:1686px;top:421px;opacity:.7" width="17" height="17"><use href="#cam"/></svg>
<svg class="ic" style="left:1711px;top:421px;opacity:.7" width="17" height="17"><use href="#lay"/></svg>
<svg class="ic" style="left:1736px;top:421px;opacity:.7" width="17" height="17"><use href="#scene"/></svg>
<svg class="ic" style="left:1761px;top:421px;opacity:.7" width="17" height="17"><use href="#world"/></svg>
<svg class="ic" style="left:1786px;top:421px;opacity:.8" width="17" height="17"><use href="#cubeg"/></svg>
<svg class="ic" style="left:1811px;top:421px" width="17" height="17" viewBox="0 0 16 16"><path d="M7 9L4 12C2 14 -1 11 1.5 9L5 6M9 7L12 4C14 2 17 5 14.5 7L11 10M5 11L11 5" stroke="#aaa" stroke-width="1.6" fill="none"/></svg>
<svg class="ic" style="left:1836px;top:421px" width="17" height="17" viewBox="0 0 16 16"><path d="M2 14L9 6" stroke="#7d9cc4" stroke-width="2.6"/><path d="M8 7C7 3 10 1 13 1.5L11 4L12.5 6L15 4C15 7 12 9 8 7Z" fill="#8fa8c8"/></svg>
<svg class="ic" style="left:1861px;top:421px" width="17" height="17" viewBox="0 0 16 16"><path d="M2.5 3H13.5L8 14.5Z" fill="none" stroke="#999" stroke-width="1.1"/><circle cx="2.5" cy="3" r="1.2" fill="#ccc"/><circle cx="13.5" cy="3" r="1.2" fill="#ccc"/><circle cx="8" cy="14.5" r="1.2" fill="#ccc"/></svg>
<svg class="ic" style="left:1886px;top:421px" width="17" height="17"><use href="#mat"/></svg>
<svg class="ic" style="left:1908px;top:422px" width="12" height="16" viewBox="0 0 12 16"><rect width="12" height="16" fill="#b5a090"/><path d="M0 0H4V4H0ZM8 0H12V4H8ZM4 4H8V8H4ZM0 8H4V12H0ZM8 8H12V12H8ZM4 12H8V16H4Z" fill="#6a4a3a"/></svg>
<svg class="ic" style="left:1904px;top:411px" width="16" height="16"><use href="#hatchr"/></svg>

<div class="p" style="left:1899px;top:450px;width:16px;height:585px;background:#666;border-radius:8px"></div>
<div class="p" style="left:1899px;top:450px;width:16px;height:308px;background:linear-gradient(90deg,#7c7c7c,#949494);border-radius:8px;border:1px solid #606060"></div>

<svg class="ic" style="left:1634px;top:458px" width="19" height="19" viewBox="0 0 16 16"><path d="M1 15L6 10" stroke="#ddd" stroke-width="1.4"/><path d="M4 7L9 12L10 9L13 6L10 3L7 6Z" fill="#ddd" stroke="#222" stroke-width=".8"/><path d="M9 2L14 7" stroke="#222" stroke-width="2"/></svg>
<svg class="ic" style="left:1660px;top:458px" width="18" height="18"><use href="#scene"/></svg>
<div class="tr" style="left:1686px;top:463px;border-left:5px solid #444;border-top-width:4px;border-bottom-width:4px"></div>
<svg class="ic" style="left:1711px;top:459px" width="17" height="17"><use href="#cube"/></svg>
<div class="x" style="left:1735px;top:458px">base</div>
<div class="tr" style="left:1786px;top:463px;border-left:5px solid #444;border-top-width:4px;border-bottom-width:4px"></div>
<svg class="ic" style="left:1809px;top:459px" width="17" height="17"><use href="#mat"/></svg>
<div class="x" style="left:1834px;top:458px">base</div>

<div class="p" style="left:1632px;top:499px;width:221px;height:149px;background:#777;border:1px solid #444;border-radius:5px"></div>
<div class="p" style="left:1638px;top:507px;width:209px;height:23px;background:#5680c2;border-radius:3px"></div>
<svg class="ic" style="left:1640px;top:509px" width="19" height="19" viewBox="0 0 19 19"><circle cx="9.5" cy="9.5" r="9" fill="#000"/><path d="M9 .6A9 9 0 0 0 5 17.5C7 13 4 9 9 7C12 5.5 13 3 12 1Z" fill="#b412b4"/></svg>
<div class="x w" style="left:1666px;top:509px">base</div>
<svg class="ic" style="left:1642px;top:629px;opacity:.6" width="12" height="12"><use href="#circp"/></svg>
<div class="p" style="left:1745px;top:634px;width:18px;height:4px;border-top:1px solid #333;border-bottom:1px solid #333"></div>
<div class="b" style="left:1864px;top:500px;width:24px;height:24px;border-radius:6px 6px 0 0;background:#8d8d8d"></div>
<div class="b" style="left:1864px;top:523px;width:24px;height:26px;background:#8d8d8d"></div>
<div class="d" style="left:1864px;top:548px;width:24px;height:26px;border-radius:0 0 6px 6px;padding:0"></div>
<svg class="ic" style="left:1868px;top:503px" width="16" height="16"><use href="#plus"/></svg>
<div class="p" style="left:1869px;top:531px;width:14px;height:4px;background:#eee;border:1px solid #333"></div>
<svg class="ic" style="left:1869px;top:553px" width="14" height="14" viewBox="0 0 14 14"><path d="M1 2H13L7 13Z" fill="#111"/><path d="M12 2L8 12" stroke="#aaa"/></svg>

<div class="d" style="left:1631px;top:655px;width:39px;height:24px;padding:0;border-radius:7px 0 0 7px"><svg class="ic" style="left:4px;top:3px" width="17" height="17"><use href="#mat"/></svg><span class="ud" style="right:4px;top:3px"></span></div>
<div class="b" style="left:1669px;top:655px;width:49px;height:24px;background:linear-gradient(#aaa,#bdbdbd);line-height:25px">base</div>
<div class="b li c" style="left:1717px;top:655px;width:25px;height:24px;line-height:25px">F</div>
<div class="b li" style="left:1741px;top:655px;width:25px;height:24px"></div><svg class="ic" style="left:1746px;top:659px" width="16" height="16"><use href="#plus"/></svg>
<div class="b li" style="left:1765px;top:655px;width:26px;height:24px;border-radius:0 6px 6px 0"></div><svg class="ic" style="left:1770px;top:659px" width="16" height="16"><use href="#cross"/></svg>
<div class="d" style="left:1801px;top:655px;width:87px;height:24px;line-height:25px;padding-left:9px">Data<span class="ud" style="top:3px"></span></div>
<div class="s" style="left:1626px;top:689px;width:268px"></div>
<div class="tr" style="left:1636px;top:699px"></div><div class="h" style="left:1651px;top:694px">Custom Properties</div><div class="g" style="left:1873px;top:700px"></div>
<div class="s" style="left:1626px;top:718px;width:268px"></div>
<div class="td" style="left:1636px;top:728px"></div><div class="h" style="left:1651px;top:723px">Preview</div><div class="g" style="left:1873px;top:730px"></div>
<svg class="p" style="left:1631px;top:757px;border-radius:5px;border:1px solid #444" width="211" height="124" viewBox="0 0 211 124">
<defs><pattern id="ck" width="35" height="35" patternUnits="userSpaceOnUse" x="0" y="0"><rect width="35" height="35" fill="#757575"/><rect width="17.5" height="17.5" fill="#5c5c5c"/><rect x="17.5" y="17.5" width="17.5" height="17.5" fill="#5c5c5c"/></pattern>
<linearGradient id="wa" x1="0" y1="0" x2="0" y2="1"><stop offset="0" stop-color="#000" stop-opacity=".05"/><stop offset=".75" stop-color="#555" stop-opacity=".5"/><stop offset="1" stop-color="#666" stop-opacity=".9"/></linearGradient>
<radialGradient id="pur" cx=".3" cy=".2" r=".9"><stop offset="0" stop-color="#a818a8"/><stop offset=".6" stop-color="#860e8c"/><stop offset="1" stop-color="#6e0a76"/></radialGradient>
<radialGradient id="shd"><stop offset="0" stop-color="#000" stop-opacity=".85"/><stop offset=".6" stop-color="#111" stop-opacity=".75"/><stop offset="1" stop-color="#000" stop-opacity="0"/></radialGradient>
<filter id="bl"><feGaussianBlur stdDeviation="2.5"/></filter></defs>
<rect width="211" height="124" fill="url(#ck)"/><rect width="211" height="85" fill="url(#wa)"/>
<rect y="85" width="211" height="39" fill="#6e6e6e"/>
<rect y="84" width="211" height="6" fill="#4a4a4a" filter="url(#bl)"/>
<path d="M0 100L60 92L100 92L50 124H0ZM140 100L211 98V110H150Z" fill="#5e5e5e"/>
<ellipse cx="160" cy="110" rx="60" ry="17" fill="url(#shd)"/>
<circle cx="105" cy="60" r="56.5" fill="url(#pur)"/>
<path d="M119 5C121 23 104 38 84 58C69 73 69 93 73 101C79 111 89 115 99 116.3A56.5 56.5 0 0 0 119 5Z" fill="#000"/>
<path d="M62 25C75 10 100 5 118 6C120 15 115 22 110 28C90 12 75 18 62 25Z" fill="#70107a" opacity=".7"/>
</svg>
<div class="p" style="left:1727px;top:884px;width:18px;height:4px;border-top:1px solid #333;border-bottom:1px solid #333"></div>
<div class="p" style="left:1851px;top:757px;width:37px;height:150px;background:linear-gradient(#5a5a5a,#3e3e3e);border:1px solid #2a2a2a;border-radius:6px"></div>
<div class="p" style="left:1851px;top:782px;width:37px;height:25px;background:#5a86c8"></div>
<div class="p" style="left:1852px;top:782px;width:35px;height:1px;background:#2a2a2a"></div><div class="p" style="left:1852px;top:807px;width:35px;height:1px;background:#2a2a2a"></div><div class="p" style="left:1852px;top:832px;width:35px;height:1px;background:#2a2a2a"></div><div class="p" style="left:1852px;top:857px;width:35px;height:1px;background:#2a2a2a"></div><div class="p" style="left:1852px;top:882px;width:35px;height:1px;background:#2a2a2a"></div>
<div class="p" style="left:1862px;top:762px;width:15px;height:15px;background:linear-gradient(135deg,#888,#a8a8a8);border:1px solid #555"></div>
<svg class="ic" style="left:1860px;top:785px" width="19" height="19" viewBox="0 0 19 19"><defs><radialGradient id="sp2" cx=".4" cy=".35" r=".7"><stop offset="0" stop-color="#fff"/><stop offset="1" stop-color="#aaa"/></radialGradient></defs><circle cx="9.5" cy="9.5" r="8" fill="url(#sp2)" stroke="#111" stroke-width="1.3"/></svg>
<svg class="ic" style="left:1861px;top:810px" width="17" height="18" viewBox="0 0 16 16"><path d="M8 .8L15 4V12L8 15.4L1 12V4Z" fill="#888" stroke="#333"/><path d="M1.5 4.2L8 7L14.5 4.2L8 1.4Z" fill="#ccc"/><path d="M8 7V15L1.5 12V4.2Z" fill="#aaa"/></svg>
<svg class="ic" style="left:1860px;top:835px" width="19" height="18" viewBox="0 0 19 18"><path d="M3 3C6 2 8 4 9.5 4S13 2 16 3C17 5 15 7 13 8C12 10 11 11 12 14L9.5 17L7 14C8 11 7 10 6 8C4 7 2 5 3 3Z" fill="#aaa"/></svg>
<svg class="ic" style="left:1861px;top:860px" width="17" height="18" viewBox="0 0 17 18"><path d="M2 16C2 10 4 5 7 2M8 16C8 12 9 9 11 7M13 16C13 14 14 12 15 11" stroke="#999" stroke-width="1.5" fill="none"/></svg>
<svg class="ic" style="left:1860px;top:884px" width="19" height="20" viewBox="0 0 19 20"><circle cx="9" cy="13" r="5.5" fill="#aaa"/><circle cx="4.5" cy="4" r="2.4" fill="#a8a860"/><path d="M9 6C10 2 17 2 18 7H9Z" fill="#6b7078"/></svg>
<div class="s" style="left:1626px;top:917px;width:268px"></div>
<div class="td" style="left:1636px;top:927px"></div><div class="h" style="left:1651px;top:923px">Surface</div><div class="g" style="left:1873px;top:930px"></div>
<div class="x" style="left:1640px;top:960px">Surface:</div>
<div class="d" style="left:1727px;top:956px;width:161px;height:25px">PBR.002</div>
<div class="p" style="left:1870px;top:966px;width:6px;height:6px;border-radius:3px;border:1px solid #ccc;background:#333"></div>
<svg class="ic" style="left:1630px;top:1006px" width="12" height="12"><use href="#circp"/></svg>
<div class="x" style="left:1652px;top:1004px">is Metallic</div>
<div class="d" style="left:1727px;top:1001px;width:161px;height:25px">Separate RGB</div>
<div class="p" style="left:1870px;top:1011px;width:6px;height:6px;border-radius:3px;border:1px solid #ccc;background:#333"></div>
<div class="p" style="left:1727px;top:1032px;width:161px;height:12px;background:#5b7aa5;border:1px solid #3a3a3a;border-radius:6px 6px 0 0"></div>
<svg class="ic" style="left:1621px;top:1024px" width="16" height="16"><use href="#hatch"/></svg>
</body></html>
